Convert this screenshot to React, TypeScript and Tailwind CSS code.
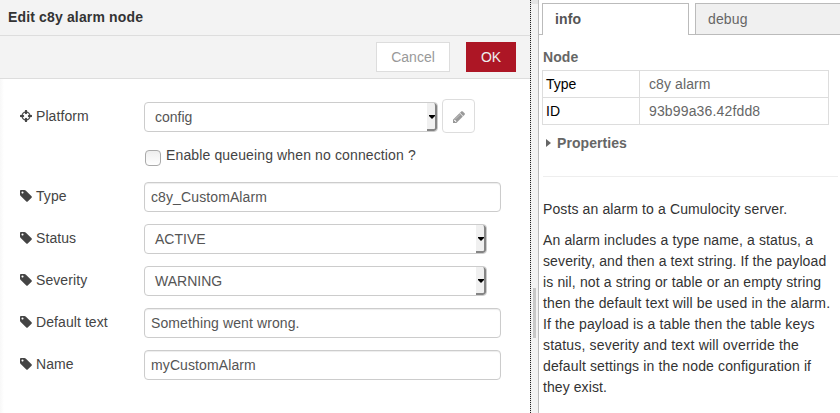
import React from "react";

const paths = {
  tag: "M448 448q0-53-37.5-90.5t-90.5-37.5-90.5 37.5-37.5 90.5 37.5 90.5 90.5 37.5 90.5-37.5 37.5-90.5zm1067 576q0 53-37 90l-491 492q-39 37-91 37-53 0-90-37l-715-716q-38-37-64.5-101t-26.5-117v-416q0-52 38-90t90-38h416q53 0 117 26.5t102 64.5l715 714q37 39 37 91z",
  crosshairs:
    "M1325 1024h-109q-26 0-45-19t-19-45v-128q0-26 19-45t45-19h109q-32-108-112.5-188.5t-188.5-112.5v109q0 26-19 45t-45 19h-128q-26 0-45-19t-19-45v-109q-108 32-188.5 112.5t-112.5 188.5h109q26 0 45 19t19 45v128q0 26-19 45t-45 19h-109q32 108 112.5 188.5t188.5 112.5v-109q0-26 19-45t45-19h128q26 0 45 19t19 45v109q108-32 188.5-112.5t112.5-188.5zm339-192v128q0 26-19 45t-45 19h-143q-37 161-154.5 278.5t-278.5 154.5v143q0 26-19 45t-45 19h-128q-26 0-45-19t-19-45v-143q-161-37-278.5-154.5t-154.5-278.5h-143q-26 0-45-19t-19-45v-128q0-26 19-45t45-19h143q37-161 154.5-278.5t278.5-154.5v-143q0-26 19-45t45-19h128q26 0 45 19t19 45v143q161 37 278.5 154.5t154.5 278.5h143q26 0 45 19t19 45z",
  pencil:
    "M491 1536l91-91-235-235-91 91v107h128v128h107zm523-928q0-22-22-22-10 0-17 7l-542 542q-7 7-7 17 0 22 22 22 10 0 17-7l542-542q7-7 7-17zm-54-192l416 416-832 832h-416v-416zm683 96q0 53-37 90l-166 166-416-416 166-165q36-38 90-38 53 0 91 38l235 234q37 39 37 91z",
};

function Label({ text, icon = "tag" }: { text: string; icon?: "tag" | "crosshairs" }) {
  return (
    <div className="flex h-[28px] w-[124px] shrink-0 items-center gap-1 self-start">
      <svg
        className="h-3 w-3"
        viewBox={icon === "tag" ? "0 128 1536 1536" : "128 128 1536 1536"}
        fill="#444"
        stroke="#444"
        strokeWidth={icon === "tag" ? 0 : 16}
      >
        <path d={paths[icon]} />
      </svg>
      <span className="tracking-[0.08px]">{text}</span>
    </div>
  );
}

function TextField({ value }: { value: string }) {
  return (
    <div className="flex h-[30px] w-[357px] items-center rounded-[4px] border border-[#ccc] bg-white px-1.5 tracking-[0.11px] text-[#555] shadow-[inset_0_1px_1px_rgba(0,0,0,0.075)]">
      {value}
    </div>
  );
}

function SelectField({ value, narrow = false }: { value: string; narrow?: boolean }) {
  return (
    <div
      className={`flex h-[30px] items-center justify-between overflow-hidden rounded-[4px] border border-[#ccc] bg-white pl-2.5 text-[#555] ${narrow ? "w-[294px]" : "w-[343px]"}`}
    >
      <span>{value}</span>
      <div className="flex h-full w-[10px] items-center justify-center rounded-r-[3px] border-r-2 border-b-2 border-[#858585] bg-[#f0f0f0] pt-0.5">
        <svg className="ml-0.5 h-[4px] w-[6px] shrink-0" viewBox="0 0 6 4">
          <path d="M0 0h6v1L3 4 0 1z" fill="#000" />
        </svg>
      </div>
    </div>
  );
}

function Row({ children }: { children: React.ReactNode }) {
  return <div className="flex h-[30px] items-center">{children}</div>;
}

export default function App() {
  return (
    <div className="flex h-[413px] w-[840px] overflow-hidden bg-white font-['Liberation_Sans',Arial,sans-serif] text-[14px] leading-5 text-[#444]">
      <section className="flex w-[530px] shrink-0 flex-col">
        <header className="flex h-9 items-center border-b border-[#ddd] bg-[#f3f3f3] pb-0.5 pl-2 font-bold tracking-[0.15px] text-[#333]">
          Edit c8y alarm node
        </header>
        <div className="flex h-[43px] items-start justify-end gap-4 border-b border-[#ddd] bg-[#f3f3f3] pt-1.5 pr-3.5">
          <div className="flex h-[30px] w-[74px] items-center justify-center border border-[#ddd] bg-white text-[#999]">
            Cancel
          </div>
          <div className="flex h-[30px] w-[50px] items-center justify-center bg-[#ad1625] text-[#eee]">
            OK
          </div>
        </div>
        <div className="flex grow bg-white">
          <div className="w-1 bg-linear-to-r from-[#f8f8f8] to-white" />
          <div className="flex flex-col gap-3 pt-[23px] pl-4">
            <Row>
              <Label text="Platform" icon="crosshairs" />
              <SelectField value="config" narrow />
              <div className="ml-1 -mt-0.5 flex h-[34px] w-[33px] items-center justify-center rounded-[4px] border border-[#ddd] bg-white">
                <svg className="mt-px h-3 w-3" viewBox="128 128 1536 1536" fill="#999">
                  <path d={paths.pencil} stroke="#999" strokeWidth={20} />
                </svg>
              </div>
            </Row>
            <div className="flex h-[26px] pt-px pl-[125px]">
              <div className="mt-[5px] h-4 w-4 rounded-[4px] border border-[#aaa] bg-linear-to-b from-[#eee] to-white" />
              <span className="ml-[5px] tracking-[0.13px]">Enable queueing when no connection ?</span>
            </div>
            <Row>
              <Label text="Type" />
              <TextField value="c8y_CustomAlarm" />
            </Row>
            <Row>
              <Label text="Status" />
              <SelectField value="ACTIVE" />
            </Row>
            <Row>
              <Label text="Severity" />
              <SelectField value="WARNING" />
            </Row>
            <Row>
              <Label text="Default text" />
              <TextField value="Something went wrong." />
            </Row>
            <Row>
              <Label text="Name" />
              <TextField value="myCustomAlarm" />
            </Row>
          </div>
        </div>
      </section>

      <div className="w-px shrink-0 bg-[repeating-linear-gradient(to_bottom,#222_0px,#222_1px,#ddd_1px,#ddd_2px)]" />
      <div className="flex w-[8px] shrink-0 flex-col border-r border-[#bbb] bg-[#f3f3f3]">
        <div className="h-1 bg-[#e4e4e4]" />
        <div className="mt-[284px] ml-0.5 h-[50px] w-[3px] bg-[#c8c8c8]" />
      </div>

      <aside className="flex min-w-0 grow flex-col bg-white">
        <div className="flex h-[35px] pt-[3px]">
          <div className="w-[3px] border-b border-[#bbb]" />
          <div className="flex w-[147px] items-center border border-b-0 border-[#bbb] pb-px pl-3 font-bold tracking-[0.15px] text-[#555]">
            info
          </div>
          <div className="w-[6px] border-b border-[#bbb]" />
          <div className="flex grow items-center border border-r-0 border-[#bbb] bg-[#f0f0f0] pl-3 tracking-[0.15px] text-[#666]">
            debug
          </div>
        </div>
        <div className="flex flex-col pl-[3px]">
          <h2 className="mt-3 ml-px font-bold tracking-[0.1px] text-[#666]">Node</h2>
          <div className="mt-[3px] grid h-[55px] w-[287px] grid-cols-[97px_1fr] grid-rows-2 border border-[#ddd]">
            <div className="flex items-center border-r border-b border-[#ddd] pl-[3px] text-black">
              Type
            </div>
            <div className="flex items-center border-b border-[#ddd] pl-[9px] tracking-[0.1px] text-[#666]">
              c8y alarm
            </div>
            <div className="flex items-center border-r border-[#ddd] pl-[3px] text-black">ID</div>
            <div className="flex items-center pl-[9px] tracking-[0.15px] text-[#666]">93b99a36.42fdd8</div>
          </div>
          <div className="mt-2 flex items-center pl-1 font-bold tracking-[0.07px] text-[#666]">
            <svg className="mr-1.5 h-2 w-[5px]" viewBox="0 0 5 8" fill="#666">
              <path d="M0 0l5 4-5 4z" />
            </svg>
            Properties
          </div>
          <div className="mt-[23px] ml-px w-[295px] border-t border-[#eee]" />
          <div className="mt-[22px] ml-px flex w-[292px] flex-col gap-2.5 leading-[21px] whitespace-nowrap text-[#333]">
            <p className="tracking-[0.12px]">Posts an alarm to a Cumulocity server.</p>
            <p>
              <span className="block tracking-[0.13px]">An alarm includes a type name, a status, a</span>
              <span className="block tracking-[0.12px]">severity, and then a text string. If the payload</span>
              <span className="block tracking-[0.14px]">is nil, not a string or table or an empty string</span>
              <span className="block tracking-[0.13px]">then the default text will be used in the alarm.</span>
              <span className="block tracking-[0.14px]">If the payload is a table then the table keys</span>
              <span className="block tracking-[0.18px]">status, severity and text will override the</span>
              <span className="block tracking-[0.13px]">default settings in the node configuration if</span>
              <span className="block tracking-[0.08px]">they exist.</span>
            </p>
          </div>
        </div>
      </aside>
    </div>
  );
}
